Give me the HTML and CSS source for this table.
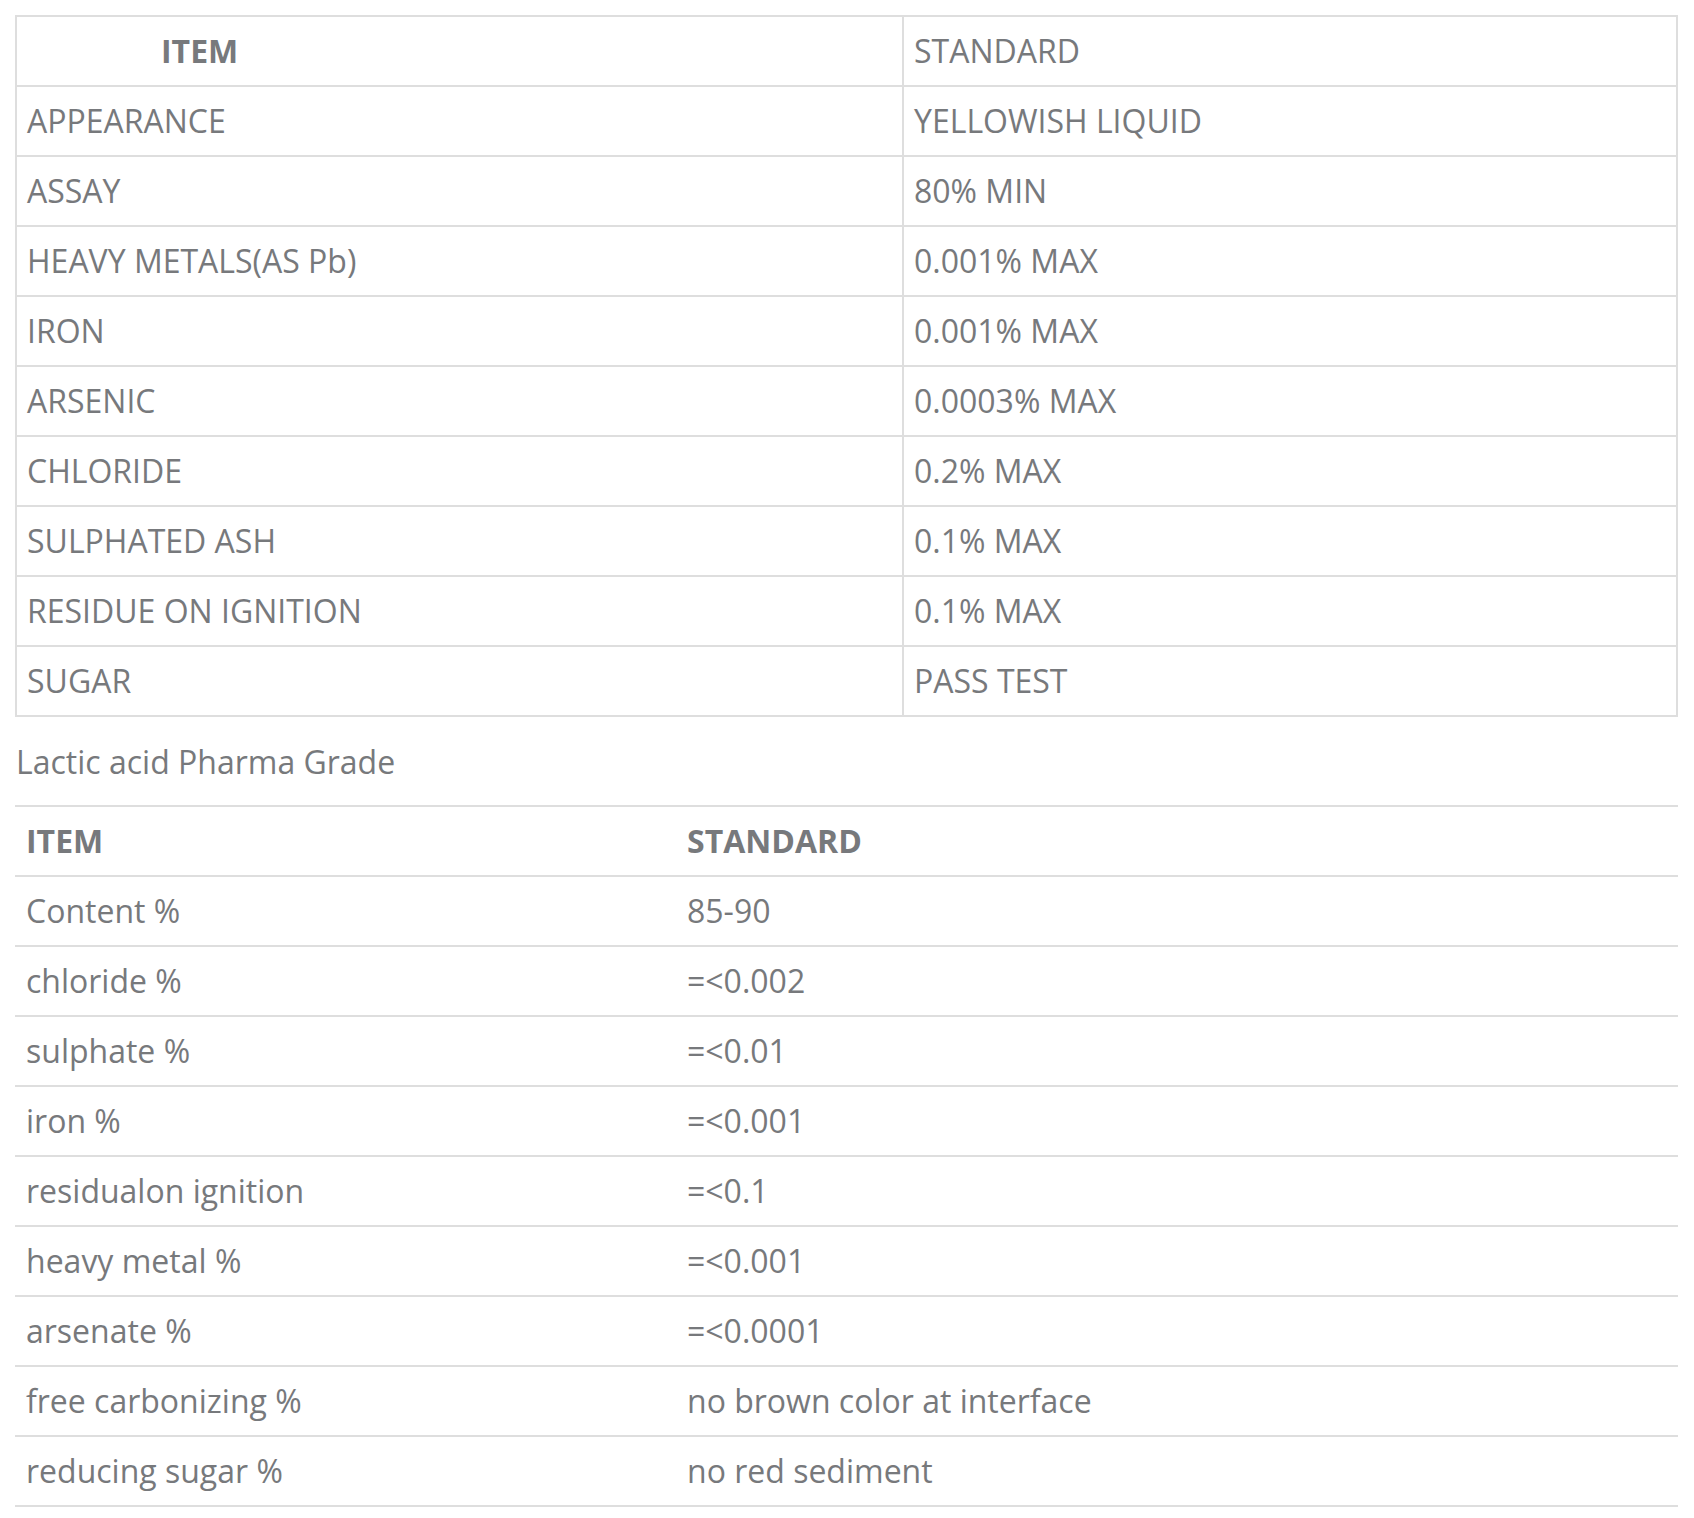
FILE: index.html
```html
<!DOCTYPE html>
<html lang="en">
<head>
<meta charset="utf-8">
<title>Lactic acid specification</title>
<link rel="stylesheet" href="styles.css">
</head>
<body>
<div class="page">
  <table class="spec spec-boxed">
    <colgroup><col class="col-a"><col></colgroup>
    <tbody>
      <tr><td class="head-item">ITEM</td><td>STANDARD</td></tr>
      <tr><td>APPEARANCE</td><td>YELLOWISH LIQUID</td></tr>
      <tr><td>ASSAY</td><td>80% MIN</td></tr>
      <tr><td>HEAVY METALS(AS Pb)</td><td>0.001% MAX</td></tr>
      <tr><td>IRON</td><td>0.001% MAX</td></tr>
      <tr><td>ARSENIC</td><td>0.0003% MAX</td></tr>
      <tr><td>CHLORIDE</td><td>0.2% MAX</td></tr>
      <tr><td>SULPHATED ASH</td><td>0.1% MAX</td></tr>
      <tr><td>RESIDUE ON IGNITION</td><td>0.1% MAX</td></tr>
      <tr><td>SUGAR</td><td>PASS TEST</td></tr>
    </tbody>
  </table>
  <p class="caption">Lactic acid Pharma Grade</p>
  <table class="spec spec-lined">
    <colgroup><col class="col-b"><col></colgroup>
    <thead>
      <tr><th>ITEM</th><th>STANDARD</th></tr>
    </thead>
    <tbody>
      <tr><td>Content %</td><td>85-90</td></tr>
      <tr><td>chloride %</td><td>=&lt;0.002</td></tr>
      <tr><td>sulphate %</td><td>=&lt;0.01</td></tr>
      <tr><td>iron %</td><td>=&lt;0.001</td></tr>
      <tr><td>residualon ignition</td><td>=&lt;0.1</td></tr>
      <tr><td>heavy metal %</td><td>=&lt;0.001</td></tr>
      <tr><td>arsenate %</td><td>=&lt;0.0001</td></tr>
      <tr><td>free carbonizing %</td><td>no brown color at interface</td></tr>
      <tr><td>reducing sugar %</td><td>no red sediment</td></tr>
    </tbody>
  </table>
</div>
</body>
</html>
```

FILE: styles.css
```css
html, body {
  margin: 0;
  padding: 0;
  background: #ffffff;
}

body {
  font-family: "Open Sans", "Noto Sans", sans-serif;
  font-size: 32px;
  color: #77797c;
}

.page {
  padding: 15px 16px 0 15px;
}

.spec {
  width: 100%;
  border-collapse: collapse;
  table-layout: fixed;
}

.spec td,
.spec th {
  height: 46px;
  line-height: 46px;
  padding: 11px 10px;
  text-align: left;
  vertical-align: middle;
  white-space: nowrap;
}

.spec-boxed {
  border: 2px solid #dedede;
}

.spec-boxed td {
  border: 2px solid #dedede;
}

.col-a {
  width: 887px;
}

.head-item {
  font-weight: 700;
}

.spec-boxed .head-item {
  padding-left: 144px;
}

.caption {
  margin: 22px 0 20px 1px;
  line-height: 46px;
}

.col-b {
  width: 661px;
}

.spec-lined th,
.spec-lined td {
  border-top: 2px solid #dedede;
  border-bottom: 2px solid #dedede;
  padding-left: 11px;
}

.spec-lined th {
  font-weight: 700;
}
```
